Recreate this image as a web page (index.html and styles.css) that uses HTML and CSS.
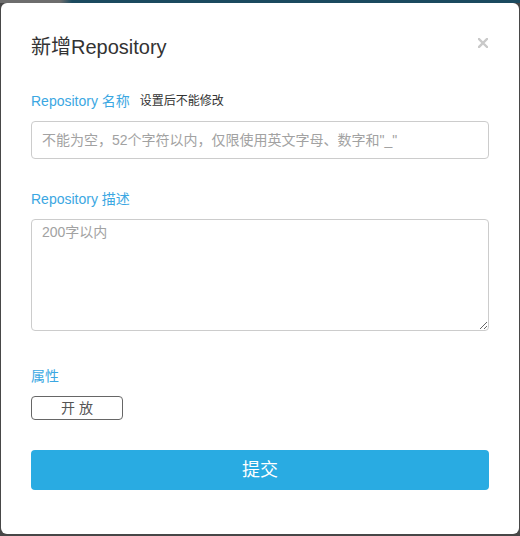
FILE: index.html
```html
<!DOCTYPE html>
<html lang="zh">
<head>
<meta charset="utf-8">
<title>新增Repository</title>
<link rel="stylesheet" href="styles.css">
</head>
<body>
<div class="modal">
  <div class="modal-header">
    <h1 class="modal-title">新增Repository</h1>
    <svg class="close" width="10" height="10" viewBox="0 0 10 10" aria-label="关闭">
      <path d="M1 1 L9 9 M9 1 L1 9" stroke="#c9c9c9" stroke-width="2.4" stroke-linecap="square"/>
    </svg>
  </div>
  <form class="form">
    <div class="label-row"><label class="label">Repository 名称</label><span class="hint">设置后不能修改</span></div>
    <input class="input" type="text" placeholder="不能为空，52个字符以内，仅限使用英文字母、数字和&quot;_&quot;">
    <div class="label-row gap-top"><label class="label">Repository 描述</label></div>
    <textarea class="textarea" placeholder="200字以内"></textarea>
    <div class="label-row gap-top-lg"><label class="label">属性</label></div>
    <button type="button" class="toggle">开 放</button>
    <button type="button" class="submit">提交</button>
  </form>
</div>
</body>
</html>
```
FILE: styles.css
```css
html, body {
  margin: 0;
  padding: 0;
}
body {
  width: 520px;
  height: 536px;
  overflow: hidden;
  background:
    linear-gradient(to right, #6d6d6d 0, #6d6d6d 60px, #1b4a5f 72px, #1b4a5f 100%) top left / 100% 3px no-repeat,
    #474747;
  font-family: "Liberation Sans", "Noto Sans CJK SC", sans-serif;
  padding-top: 3px;
  box-sizing: border-box;
}
.modal {
  margin-left: 1px;
  width: 518px;
  height: 531px;
  box-sizing: border-box;
  background: #fff;
  border-radius: 6px;
  padding: 30px 29px 0 30px;
}
.modal-header {
  display: flex;
  justify-content: space-between;
  align-items: flex-start;
  height: 28px;
}
.modal-title {
  margin: 0;
  font-size: 20px;
  line-height: 28px;
  font-weight: normal;
  color: #333;
}
.close {
  margin-top: 5px;
  margin-right: 2px;
  display: block;
}
.form {
  display: flex;
  flex-direction: column;
  align-items: flex-start;
  margin-top: 30px;
}
.label-row {
  display: flex;
  align-items: center;
  height: 20px;
  margin-bottom: 10px;
}
.gap-top { margin-top: 30px; }
.gap-top-lg { margin-top: 35px; }
.label {
  font-size: 14px;
  line-height: 20px;
  color: #3ba7e2;
}
.hint {
  font-size: 12px;
  line-height: 20px;
  color: #333;
  margin-left: 10px;
}
.input, .textarea {
  width: 458px;
  box-sizing: border-box;
  border: 1px solid #ccc;
  border-radius: 4px;
  font-family: "Liberation Sans", "Noto Sans CJK SC", sans-serif;
  font-size: 14px;
  color: #555;
  padding: 0 10px;
  margin: 0;
  outline: none;
  background: #fff;
}
.input {
  height: 38px;
}
.textarea {
  height: 112px;
  padding-top: 2px;
  line-height: 20px;
  resize: vertical;
}
.input::placeholder, .textarea::placeholder {
  color: #a2a2a2;
  opacity: 1;
}
.toggle {
  width: 92px;
  height: 24px;
  box-sizing: border-box;
  border: 1px solid #666;
  border-radius: 4px;
  background: #fff;
  color: #555;
  font-family: "Liberation Sans", "Noto Sans CJK SC", sans-serif;
  font-size: 14px;
  line-height: 20px;
  padding: 0;
  margin: 0;
}
.submit {
  margin-top: 30px;
  width: 458px;
  height: 40px;
  border: none;
  border-radius: 4px;
  background: #29abe2;
  color: #fff;
  font-family: "Liberation Sans", "Noto Sans CJK SC", sans-serif;
  font-size: 18px;
  line-height: 24px;
  padding: 0;
}
```
